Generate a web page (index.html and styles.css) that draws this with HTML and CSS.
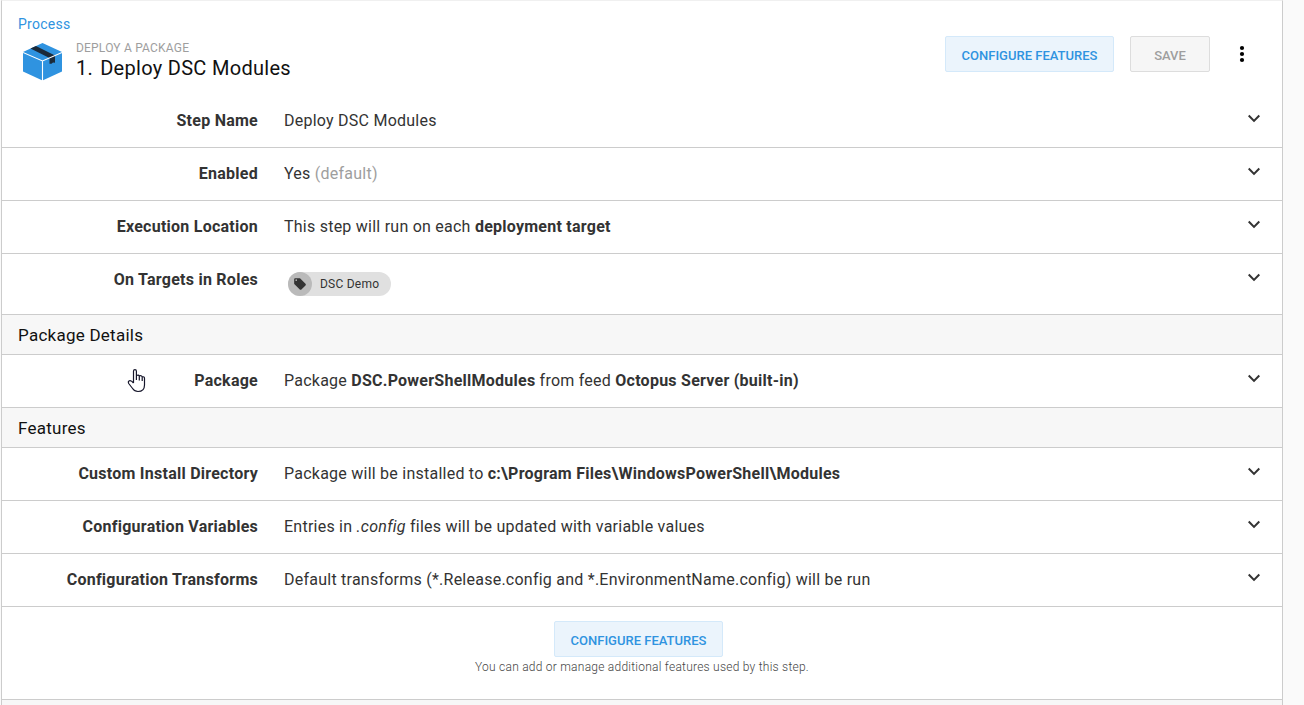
FILE: index.html
```html
<!DOCTYPE html>
<html lang="en">
<head>
<meta charset="utf-8">
<title>Deploy DSC Modules</title>
<link rel="stylesheet" href="styles.css">
</head>
<body>
<svg width="0" height="0" class="defs">
  <symbol id="chevron" viewBox="0 0 24 24"><path d="M7.41 7.84 12 12.42l4.59-4.58L18 9.25l-6 6-6-6z"/></symbol>
</svg>
<main class="card">
  <header class="header">
    <a class="crumb">Process</a>
    <div class="header-row">
      <svg class="logo" width="40" height="38" viewBox="0 0 40 38">
        <path fill="#2f93e0" d="M19.500 0 39 9 39 28.500 19.500 37.500 0 28.500 0 9z"/>
        <path fill="#1b2a3a" d="M7.500 5.500 13 3 32 12.500V19.700L30 19.400 28.500 20.700 26.500 20.700V15z"/>
        <path fill="none" stroke="#fff" stroke-width="1.100" d="M0 9.500 19.500 18 39 9.500M19.500 18V38"/>
      </svg>
      <div class="titles">
        <div class="kind">DEPLOY A PACKAGE</div>
        <h1 class="title"><span class="number">1.</span><span>Deploy DSC Modules</span></h1>
      </div>
      <div class="actions">
        <button class="button primary">CONFIGURE FEATURES</button>
        <button class="button disabled">SAVE</button>
        <svg class="more" width="24" height="24" viewBox="0 0 24 24"><circle cx="12" cy="6" r="2.100"/><circle cx="12" cy="12" r="2.100"/><circle cx="12" cy="18" r="2.100"/></svg>
      </div>
    </div>
  </header>
  <section class="row"><div class="label">Step Name</div><div class="value">Deploy DSC Modules</div><svg class="chevron"><use href="#chevron"/></svg></section>
  <section class="row"><div class="label">Enabled</div><div class="value">Yes <span class="muted">(default)</span></div><svg class="chevron"><use href="#chevron"/></svg></section>
  <section class="row"><div class="label">Execution Location</div><div class="value">This step will run on each <b>deployment target</b></div><svg class="chevron"><use href="#chevron"/></svg></section>
  <section class="row roles"><div class="label">On Targets in Roles</div><div class="value">
    <span class="chip"><span class="chip-icon"><svg width="14" height="14" viewBox="0 0 24 24"><path d="M21.410 11.580l-9-9C12.050 2.220 11.550 2 11 2H4c-1.100 0-2 .9-2 2v7c0 .55.22 1.050.59 1.420l9 9c.36.36.86.58 1.410.58.55 0 1.050-.22 1.410-.59l7-7c.37-.36.59-.86.59-1.410 0-.55-.23-1.060-.59-1.420zM5.500 7C4.670 7 4 6.330 4 5.500S4.670 4 5.500 4 7 4.670 7 5.500 6.330 7 5.500 7z"/></svg></span><span class="chip-text">DSC Demo</span></span>
  </div><svg class="chevron"><use href="#chevron"/></svg></section>
  <h2 class="section">Package Details</h2>
  <section class="row"><div class="label">Package</div><div class="value">Package <b>DSC.PowerShellModules</b> from feed <b>Octopus Server (built-in)</b></div><svg class="chevron"><use href="#chevron"/></svg></section>
  <h2 class="section">Features</h2>
  <section class="row"><div class="label">Custom Install Directory</div><div class="value">Package will be installed to <b>c:\Program Files\WindowsPowerShell\Modules</b></div><svg class="chevron"><use href="#chevron"/></svg></section>
  <section class="row"><div class="label">Configuration Variables</div><div class="value">Entries in <i>.config</i> files will be updated with variable values</div><svg class="chevron"><use href="#chevron"/></svg></section>
  <section class="row"><div class="label">Configuration Transforms</div><div class="value">Default transforms (*.Release.config and *.EnvironmentName.config) will be run</div><svg class="chevron"><use href="#chevron"/></svg></section>
  <section class="footer">
    <button class="button primary">CONFIGURE FEATURES</button>
    <p class="note">You can add or manage additional features used by this step.</p>
  </section>
  <div class="next"></div>
</main>
<svg class="cursor" width="20" height="25" viewBox="0 0 20 25"><path fill="#fff" stroke="#15152a" stroke-width="1.200" stroke-linejoin="round" d="M6.500 15V3.200C6.500 1 9.400 1 9.400 3.200V7.600Q11.400 6.400 12.300 8Q14.400 7 15.200 8.900Q17.500 8.300 17.500 10.500V17Q17.500 23.500 11 23.500Q7.500 23.500 5.600 20.500L1.700 15.500Q.5 13 3 12.700Q4.500 12.600 6.500 15M9.400 7.500V12M12.300 8V12.500M15.200 9V13"/></svg>
</body>
</html>
```
FILE: styles.css
```css
* { box-sizing: border-box; }
body {
  margin: 0;
  height: 705px;
  overflow: hidden;
  background: #fafafa;
  font-family: Roboto, "Liberation Sans", sans-serif;
  color: #333;
}
.defs { position: absolute; }
.card {
  width: 1282px;
  height: 705px;
  margin-left: 1px;
  background: #fff;
  border: 1px solid #ccc;
  border-top-color: #f0f0f0;
  border-bottom: 0;
  overflow: hidden;
}
.header { height: 94px; padding: 15px 28px 0 16px; }
.crumb { display: block; font-size: 14px; line-height: 16px; letter-spacing: .25px; color: #2f93e0; }
.header-row { display: flex; align-items: flex-start; }
.logo { margin: 11px 13px 0 5px; }
.titles { flex: 1; padding-top: 8px; }
.kind { font-size: 12px; line-height: 16px; letter-spacing: .2px; color: #9e9e9e; }
.title { display: flex; gap: 7px; margin: 0; font-size: 20px; line-height: 24px; font-weight: 400; letter-spacing: .3px; color: #111; }
.actions { display: flex; align-items: center; gap: 16px; padding-top: 4px; }
.button {
  height: 36px;
  padding: 3px 0 0;
  border: 1px solid;
  border-radius: 2px;
  font: 500 13px/30px Roboto, "Liberation Sans", sans-serif;
}
.primary { width: 169px; color: #2f93e0; background: #ebf4fc; border-color: #d4e9fa; }
.disabled { width: 80px; color: #9e9e9e; background: #f6f6f6; border-color: #ddd; }
.more { margin-left: 4px; fill: #000; }
.row {
  display: flex;
  height: 53px;
  border-bottom: 1px solid #ccc;
  padding: 16px 16px 0 0;
  font-size: 16px;
  line-height: 20px;
  letter-spacing: .24px;
}
.label { width: 256px; margin-right: 26px; text-align: right; font-weight: 700; letter-spacing: .25px; }
.value { flex: 1; }
.value b { letter-spacing: .25px; }
.muted { color: #9e9e9e; }
.chevron { width: 24px; height: 24px; margin-top: -4px; fill: #333; }
.roles { height: 61px; }
.chip { display: inline-flex; align-items: center; width: 103px; height: 24px; margin: 2px 0 0 4px; border-radius: 12px; background: #e0e0e0; }
.chip-icon { display: flex; align-items: center; justify-content: center; width: 24px; height: 24px; border-radius: 50%; background: #bababa; fill: #333; }
.chip-text { margin-left: 8px; font-size: 12px; letter-spacing: .24px; }
.section { height: 40px; margin: 0; padding-left: 16px; border-bottom: 1px solid #ccc; background: #f7f7f7; color: #111; font-size: 17px; line-height: 41px; font-weight: 400; letter-spacing: .25px; }
.footer { display: flex; flex-direction: column; align-items: center; height: 93px; padding: 14px 0 0; border-bottom: 1px solid #ccc; }
.footer .button { margin-right: 7px; }
.note { margin: 2px 0 0; font-size: 12px; line-height: 16px; font-weight: 300; letter-spacing: .24px; color: #444; }
.next { height: 6px; background: #f7f7f7; }
.cursor { position: absolute; left: 127px; top: 368px; }
```
